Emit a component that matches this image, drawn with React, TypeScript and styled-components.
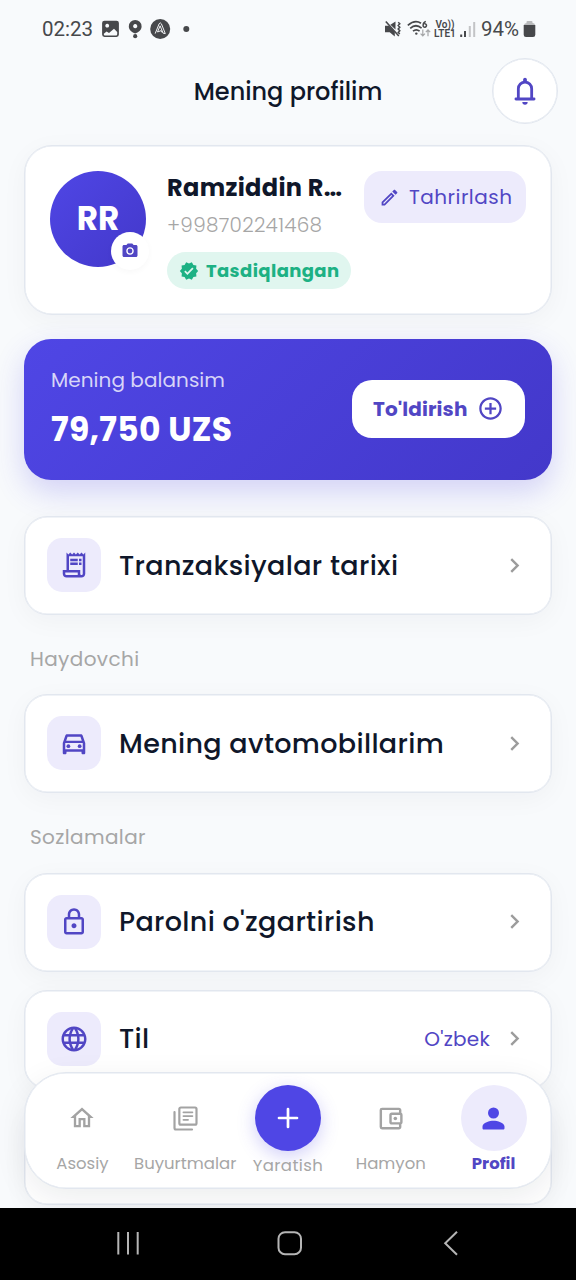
import React from "react";
import styled, { createGlobalStyle, css } from "styled-components";
import type { IconType } from "react-icons";
import {
  MdAddCircleOutline,
  MdChevronRight,
  MdLanguage,
  MdOutlineAccountBalanceWallet,
  MdOutlineDirectionsCar,
  MdOutlineEdit,
  MdOutlineHome,
  MdOutlineLock,
  MdOutlineReceiptLong,
  MdPhotoCamera,
  MdVerified,
} from "react-icons/md";

const colors = {
  page: "#f8fafc",
  surface: "#ffffff",
  border: "#e2e7ef",
  ink: "#0f172a",
  muted: "#a6a6a6",
  primary: "#4f46e5",
  primaryText: "#5146c4",
  primarySoft: "#edebfc",
  success: "#1db184",
  successSoft: "#e0f6ef",
  status: "#47484b",
};

const GlobalStyle = createGlobalStyle`
  * { box-sizing: border-box; }
  body {
    margin: 0;
    background: ${colors.page};
    font-family: Poppins, Inter, sans-serif;
    color: ${colors.ink};
  }
  button { font: inherit; border: 0; padding: 0; }
  svg { display: block; flex: none; }
`;

const Screen = styled.div`
  position: relative;
  display: flex;
  flex-direction: column;
  width: 576px;
  height: 1280px;
  overflow: hidden;
`;

/* Status bar */

const StatusBar = styled.div`
  display: flex;
  align-items: center;
  justify-content: space-between;
  flex: none;
  height: 58px;
  padding: 0 40px 0 42px;
  color: ${colors.status};
  font-family: Roboto, sans-serif;
  font-size: 20.5px;
`;

const StatusGroup = styled.div<{ $gap: number }>`
  display: flex;
  align-items: center;
  gap: ${(p) => p.$gap}px;
`;

const StatusText = styled.span`
  line-height: 24px;
`;

const BatteryText = styled(StatusText)`
  margin-right: -1px;
`;

const VolteMark = styled.span`
  display: flex;
  flex-direction: column;
  align-items: center;
  width: 22px;
  margin: 0 -1px 0 -3px;
  font-size: 10px;
  font-weight: 600;
  line-height: 9.5px;
  white-space: nowrap;
`;

/* Header */

const Header = styled.header`
  display: grid;
  grid-template-columns: 66px 1fr 66px;
  align-items: center;
  flex: none;
  height: 66px;
  padding: 0 18px;
`;

const Title = styled.h1`
  grid-column: 2;
  margin: 1px 0 0;
  text-align: center;
  font-size: 24px;
  font-weight: 500;
`;

const BellButton = styled.button`
  display: flex;
  align-items: center;
  justify-content: center;
  width: 66px;
  height: 66px;
  border: 1px solid ${colors.border};
  border-radius: 50%;
  background: ${colors.surface};
  box-shadow: inset 0 0 0 0.5px ${colors.border};
`;

/* Content */

const Content = styled.main`
  display: flex;
  flex-direction: column;
  flex: 1;
  min-height: 0;
  padding: 21px 24px 0;
  overflow: hidden;
`;

const surface = css`
  flex: none;
  border: 1px solid ${colors.border};
  background: ${colors.surface};
  box-shadow: inset 0 0 0 0.5px ${colors.border}, 0 6px 27px rgba(15, 23, 42, 0.04);
`;

const ProfileCard = styled.section`
  ${surface}
  display: flex;
  align-items: flex-start;
  height: 170px;
  padding: 25px 25px 0;
  border-radius: 28px;
`;

const Avatar = styled.div`
  position: relative;
  display: flex;
  align-items: center;
  justify-content: center;
  flex: none;
  width: 96px;
  height: 96px;
  border-radius: 50%;
  background: linear-gradient(135deg, #4f46e5, #4338ca);
  color: #fff;
  font-size: 32.5px;
  font-weight: 700;
`;

const CameraBadge = styled.span`
  position: absolute;
  right: -3px;
  bottom: -3px;
  display: flex;
  align-items: center;
  justify-content: center;
  width: 38px;
  height: 38px;
  border-radius: 50%;
  background: #fff;
  box-shadow: 0 2px 6px rgba(15, 23, 42, 0.03);
  color: ${colors.primaryText};
`;

const ProfileInfo = styled.div`
  display: flex;
  flex-direction: column;
  align-items: flex-start;
  width: 197px;
  margin-left: 21px;
`;

const ProfileName = styled.div`
  height: 36px;
  line-height: 34px;
  font-size: 24px;
  font-weight: 700;
  letter-spacing: 0.35px;
  white-space: nowrap;
`;

const ProfilePhone = styled.div`
  height: 45px;
  line-height: 37px;
  color: ${colors.muted};
  font-size: 20px;
  font-weight: 300;
  letter-spacing: 0.27px;
`;

const VerifiedPill = styled.div`
  display: flex;
  align-items: center;
  gap: 7px;
  width: 184px;
  height: 37px;
  padding-left: 12px;
  border-radius: 19px;
  background: ${colors.successSoft};
  color: ${colors.success};
  font-size: 18px;
  font-weight: 700;
  letter-spacing: 0.38px;
`;

const EditButton = styled.button`
  display: flex;
  align-items: center;
  gap: 9px;
  flex: none;
  width: 162px;
  height: 52px;
  padding-left: 15px;
  border-radius: 18px;
  background: ${colors.primarySoft};
  color: ${colors.primaryText};
  font-size: 20px;
  font-weight: 400;
  letter-spacing: 0.48px;
`;

const BalanceCard = styled.section`
  display: flex;
  align-items: center;
  justify-content: space-between;
  flex: none;
  height: 141px;
  margin-top: 23.5px;
  padding: 0 27px 1px 27px;
  border-radius: 27px;
  background: linear-gradient(135deg, #4f46e5, #4338ca);
  box-shadow: 0 12px 30px rgba(79, 70, 229, 0.22);
`;

const BalanceLabel = styled.div`
  height: 30px;
  line-height: 30px;
  color: rgba(255, 255, 255, 0.78);
  font-size: 20px;
  letter-spacing: 0.05px;
`;

const BalanceAmount = styled.div`
  height: 48px;
  margin-top: 9px;
  line-height: 52px;
  color: #fff;
  font-size: 33px;
  font-weight: 700;
  letter-spacing: 0.3px;
`;

const TopUpButton = styled.button`
  display: flex;
  align-items: center;
  justify-content: space-between;
  width: 173px;
  height: 58px;
  padding: 0 21px;
  border-radius: 20px;
  background: #fff;
  color: ${colors.primaryText};
  font-size: 20px;
  font-weight: 700;
  letter-spacing: 0.1px;
`;

const MenuCard = styled.div<{ $top: number }>`
  ${surface}
  display: flex;
  align-items: center;
  height: 99px;
  margin-top: ${(p) => p.$top}px;
  padding: 0 22px 1px;
  border-radius: 23px;
`;

const MenuIcon = styled.span`
  display: flex;
  align-items: center;
  justify-content: center;
  width: 54px;
  height: 54px;
  border-radius: 15px;
  background: ${colors.primarySoft};
  color: ${colors.primaryText};
`;

const MenuLabel = styled.span`
  flex: 1;
  margin-left: 18px;
  padding-top: 1px;
  font-size: 27px;
  font-weight: 500;
  letter-spacing: 0.34px;
  white-space: nowrap;
`;

const MenuValue = styled.span`
  margin-right: 10px;
  color: ${colors.primaryText};
  font-size: 20px;
  font-weight: 400;
  letter-spacing: 0.25px;
`;

const Chevron = styled(MdChevronRight)`
  color: #9c9c9c;
`;

const SectionLabel = styled.h2`
  flex: none;
  height: 30px;
  margin: 29px 0 0 6px;
  line-height: 30px;
  color: ${colors.muted};
  font-size: 20px;
  font-weight: 400;
  letter-spacing: 0.38px;
`;

/* Floating tab bar */

const TabBar = styled.nav`
  position: absolute;
  left: 24px;
  right: 24px;
  bottom: 91px;
  display: grid;
  grid-template-columns: repeat(5, minmax(0, 1fr));
  height: 117px;
  padding: 12px 6px 0;
  border: 1px solid ${colors.border};
  border-radius: 42px;
  background: #fff;
  box-shadow: inset 0 0 0 0.5px ${colors.border}, 0 9px 32px rgba(15, 23, 42, 0.08);
`;

const Tab = styled.div`
  display: flex;
  flex-direction: column;
  align-items: center;
`;

const TabIcon = styled.span<{ $kind?: "action" | "active" }>`
  display: flex;
  align-items: center;
  justify-content: center;
  flex: none;
  width: 66px;
  height: 66px;
  border-radius: 50%;
  color: #a3a3a3;
  ${(p) =>
    p.$kind === "action" &&
    css`
      background: ${colors.primary};
      color: #fff;
      box-shadow: 0 5px 18px rgba(79, 70, 229, 0.26);
    `}
  ${(p) =>
    p.$kind === "active" &&
    css`
      background: ${colors.primarySoft};
      color: ${colors.primary};
    `}
`;

const TabLabel = styled.span<{ $kind?: "action" | "active" }>`
  height: 24px;
  margin-top: ${(p) => (p.$kind === "action" ? 3 : 1)}px;
  line-height: 24px;
  color: ${(p) => (p.$kind === "active" ? colors.primaryText : colors.muted)};
  font-size: 16.5px;
  font-weight: ${(p) => (p.$kind === "active" ? 700 : 400)};
  letter-spacing: ${(p) => (p.$kind === "action" ? 0.4 : 0)}px;
  white-space: nowrap;
`;

/* System navigation */

const SystemNav = styled.footer`
  position: relative;
  display: flex;
  align-items: center;
  justify-content: space-between;
  flex: none;
  height: 72px;
  padding: 0 112px 2px 115px;
  background: #000;
`;

const StatusIconsLeft = () => (
  <svg width="90" height="24" viewBox="101 17 90 24" fill="#47484b">
    <path
      fillRule="evenodd"
      d="M104.5 20.7h12q2.4 0 2.4 2.4v11.5q0 2.4-2.4 2.4h-12q-2.4 0-2.4-2.4V23.1q0-2.4 2.4-2.4zM103.8 34.3q0 1.2 1.2 1.2h11q1.2 0 1.2-1.2v-2.3l-3.2-3.2-5 4.2-2.4-1.5-2.8 2.2zM107.2 23.8a1.9 1.9 0 1 0 .01 0z"
    />
    <path
      fillRule="evenodd"
      d="M135.2 20a6.400 6.400 0 0 1 6.400 6.400c0 3.800-3.400 5.600-6.400 7.200-3-1.600-6.400-3.400-6.400-7.200A6.400 6.400 0 0 1 135.200 20zm0 4.100a2.100 2.100 0 1 0 .01 0z"
    />
    <circle cx="135.2" cy="36.2" r="2.1" />
    <circle cx="160.2" cy="29" r="10" />
    <path
      d="M155.2 33.6l3.900-9.800q1.100-2 2.300 0l3.900 9.800-2.200-.4-3-7.400-2.600 6.200 3.700-1.400 1 2"
      fill="none"
      stroke="#f1f2f4"
      strokeWidth="1"
      strokeLinejoin="round"
    />
    <circle cx="186.3" cy="29" r="3" />
  </svg>
);

const MuteIcon = () => (
  <svg width="17" height="18" viewBox="0 0 17 18" fill="#47484b">
    <path d="M0 5.8h4l5.800 6v4.700L4.700 12.300H0z" />
    <path d="M5.400 4.800L10.500 1.400v8z" />
    <path d="M.8 1.500l13 14.500" stroke="#47484b" strokeWidth="1.600" />
    <path
      d="M13.200 2.200l1.600 1.600-1.600 1.800 1.600 1.700-1.600 1.700 1.600 1.700-1.600 1.700 1.600 1.600"
      fill="none"
      stroke="#47484b"
      strokeWidth="1.500"
    />
  </svg>
);

const WifiIcon = () => (
  <svg width="25" height="20" viewBox="0 0 25 20" fill="none" stroke="#47484b" strokeWidth="1.700">
    <path d="M.8 6.300Q8 .2 14 4.300M3.200 9.300q5.600-5 11.400-.2M6 12.200q3.300-2.800 6.600 0" />
    <circle cx="9.300" cy="14.600" r="1.200" fill="#47484b" stroke="none" />
    <path d="M18.800 2.400q-2.700 1-2.700 4a1.700 1.700 0 1 0 1.300-1.600" strokeWidth="1.500" />
    <path d="M15.800 10.500v6.300m-2.200-2.200l2.200 2.200 2.200-2.200M21 17.200v-6.300m-2.200 2.200l2.200-2.200 2.200 2.200" stroke="#a5a6a8" strokeWidth="1.200" />
  </svg>
);

const SignalIcon = () => (
  <svg width="16" height="17" viewBox="0 0 16 17">
    <path d="M1.200 13.500V16M5 10v6" stroke="#47484b" strokeWidth="2" />
    <path d="M9.800 5v11M14.200 1v15" stroke="#c3c4c6" strokeWidth="2" />
  </svg>
);

const BatteryIcon = () => (
  <svg width="13" height="18" viewBox="0 0 13 18">
    <path d="M3.500 4V2q0-1 1-1h4q1 0 1 1v1q2.500 0 2.500 2H1q0-1.500 2.500-2z" fill="#b9babc" />
    <path d="M.7 5h11.600v9.700q0 2.300-2.300 2.300H3q-2.300 0-2.300-2.300z" fill="#47484b" />
  </svg>
);

const BellIcon = () => (
  <svg width="32" height="32" viewBox="0 0 24 24" fill="none" stroke="#5146c4" strokeWidth="2.100" strokeLinecap="round">
    <path d="M5.200 18h13.600M7 18v-7.700a5 5 0 0 1 10 0V18" />
    <path d="M12 3.400v1" strokeWidth="2.800" />
    <path d="M10 20.300h4a2 2 0 0 1-4 0z" fill="#5146c4" stroke="none" />
  </svg>
);

const BooksIcon = () => (
  <svg width="29" height="29" viewBox="0 0 24 24" fill="none" stroke="#a3a3a3" strokeLinecap="round">
    <rect x="6.900" y="2.900" width="14.200" height="14.200" rx="1.200" strokeWidth="1.800" />
    <path d="M2.900 6.600v13.300q0 1.200 1.200 1.200h13.300" strokeWidth="1.800" />
    <path d="M10.300 6.900h7.400M10.300 10h7.400M10.300 13.100h3.800" strokeWidth="1.500" />
  </svg>
);

const PlusIcon = () => (
  <svg width="36" height="36" viewBox="0 0 24 24" stroke="#fff" strokeWidth="1.800" strokeLinecap="round">
    <path d="M12 6v12M6 12h12" />
  </svg>
);

const PersonIcon = () => (
  <svg width="33" height="33" viewBox="0 0 24 24" fill="#4f46e5">
    <circle cx="12" cy="8" r="4" />
    <path d="M12 13.600c2.670 0 8 1.340 8 4.200V19c0 .55-.45 1-1 1H5c-.55 0-1-.45-1-1v-1.200c0-2.860 5.330-4.200 8-4.200z" />
  </svg>
);

const RecentsIcon = () => (
  <svg width="26" height="26" viewBox="0 0 26 26" stroke="#b5b5b5" strokeWidth="2">
    <path d="M3.300 2v22.500M13 2v22.500M22.700 2v22.500" />
  </svg>
);

const HomeButtonIcon = () => (
  <svg width="26" height="26" viewBox="0 0 26 26" fill="none" stroke="#b5b5b5" strokeWidth="2">
    <rect x="1.500" y="2.200" width="22.500" height="22" rx="6.500" />
  </svg>
);

const BackIcon = () => (
  <svg width="26" height="26" viewBox="0 0 26 26" fill="none" stroke="#b5b5b5" strokeWidth="2">
    <path d="M19 1.800L7.200 13.300 19 24.800" />
  </svg>
);

interface MenuItemProps {
  icon: IconType;
  label: string;
  top: number;
  value?: string;
}

const MenuItem = ({ icon: Icon, label, top, value }: MenuItemProps) => (
  <MenuCard $top={top}>
    <MenuIcon>
      <Icon size={30} />
    </MenuIcon>
    <MenuLabel>{label}</MenuLabel>
    {value && <MenuValue>{value}</MenuValue>}
    <Chevron size={29} />
  </MenuCard>
);

export default function App() {
  return (
    <>
      <GlobalStyle />
      <Screen>
        <StatusBar>
          <StatusGroup $gap={8}>
            <StatusText>02:23</StatusText>
            <StatusIconsLeft />
          </StatusGroup>
          <StatusGroup $gap={5}>
            <MuteIcon />
            <WifiIcon />
            <VolteMark>
              <span>Vo))</span>
              <span>LTE1</span>
            </VolteMark>
            <SignalIcon />
            <BatteryText>94%</BatteryText>
            <BatteryIcon />
          </StatusGroup>
        </StatusBar>

        <Header>
          <Title>Mening profilim</Title>
          <BellButton aria-label="Bildirishnomalar">
            <BellIcon />
          </BellButton>
        </Header>

        <Content>
          <ProfileCard>
            <Avatar>
              RR
              <CameraBadge>
                <MdPhotoCamera size={18} />
              </CameraBadge>
            </Avatar>
            <ProfileInfo>
              <ProfileName>Ramziddin R…</ProfileName>
              <ProfilePhone>+998702241468</ProfilePhone>
              <VerifiedPill>
                <MdVerified size={20} />
                Tasdiqlangan
              </VerifiedPill>
            </ProfileInfo>
            <EditButton>
              <MdOutlineEdit size={21} />
              Tahrirlash
            </EditButton>
          </ProfileCard>

          <BalanceCard>
            <div>
              <BalanceLabel>Mening balansim</BalanceLabel>
              <BalanceAmount>79,750 UZS</BalanceAmount>
            </div>
            <TopUpButton>
              To'ldirish
              <MdAddCircleOutline size={27} />
            </TopUpButton>
          </BalanceCard>

          <MenuItem icon={MdOutlineReceiptLong} label="Tranzaksiyalar tarixi" top={36.5} />
          <SectionLabel>Haydovchi</SectionLabel>
          <MenuItem icon={MdOutlineDirectionsCar} label="Mening avtomobillarim" top={20.3} />
          <SectionLabel>Sozlamalar</SectionLabel>
          <MenuItem icon={MdOutlineLock} label="Parolni o'zgartirish" top={20.3} />
          <MenuItem icon={MdLanguage} label="Til" top={18} value="O'zbek" />
          <MenuCard $top={17.4} />
        </Content>

        <TabBar>
          <Tab>
            <TabIcon>
              <MdOutlineHome size={28} />
            </TabIcon>
            <TabLabel>Asosiy</TabLabel>
          </Tab>
          <Tab>
            <TabIcon>
              <BooksIcon />
            </TabIcon>
            <TabLabel>Buyurtmalar</TabLabel>
          </Tab>
          <Tab>
            <TabIcon $kind="action">
              <PlusIcon />
            </TabIcon>
            <TabLabel $kind="action">Yaratish</TabLabel>
          </Tab>
          <Tab>
            <TabIcon>
              <MdOutlineAccountBalanceWallet size={29} />
            </TabIcon>
            <TabLabel>Hamyon</TabLabel>
          </Tab>
          <Tab>
            <TabIcon $kind="active">
              <PersonIcon />
            </TabIcon>
            <TabLabel $kind="active">Profil</TabLabel>
          </Tab>
        </TabBar>

        <SystemNav>
          <RecentsIcon />
          <HomeButtonIcon />
          <BackIcon />
        </SystemNav>
      </Screen>
    </>
  );
}
